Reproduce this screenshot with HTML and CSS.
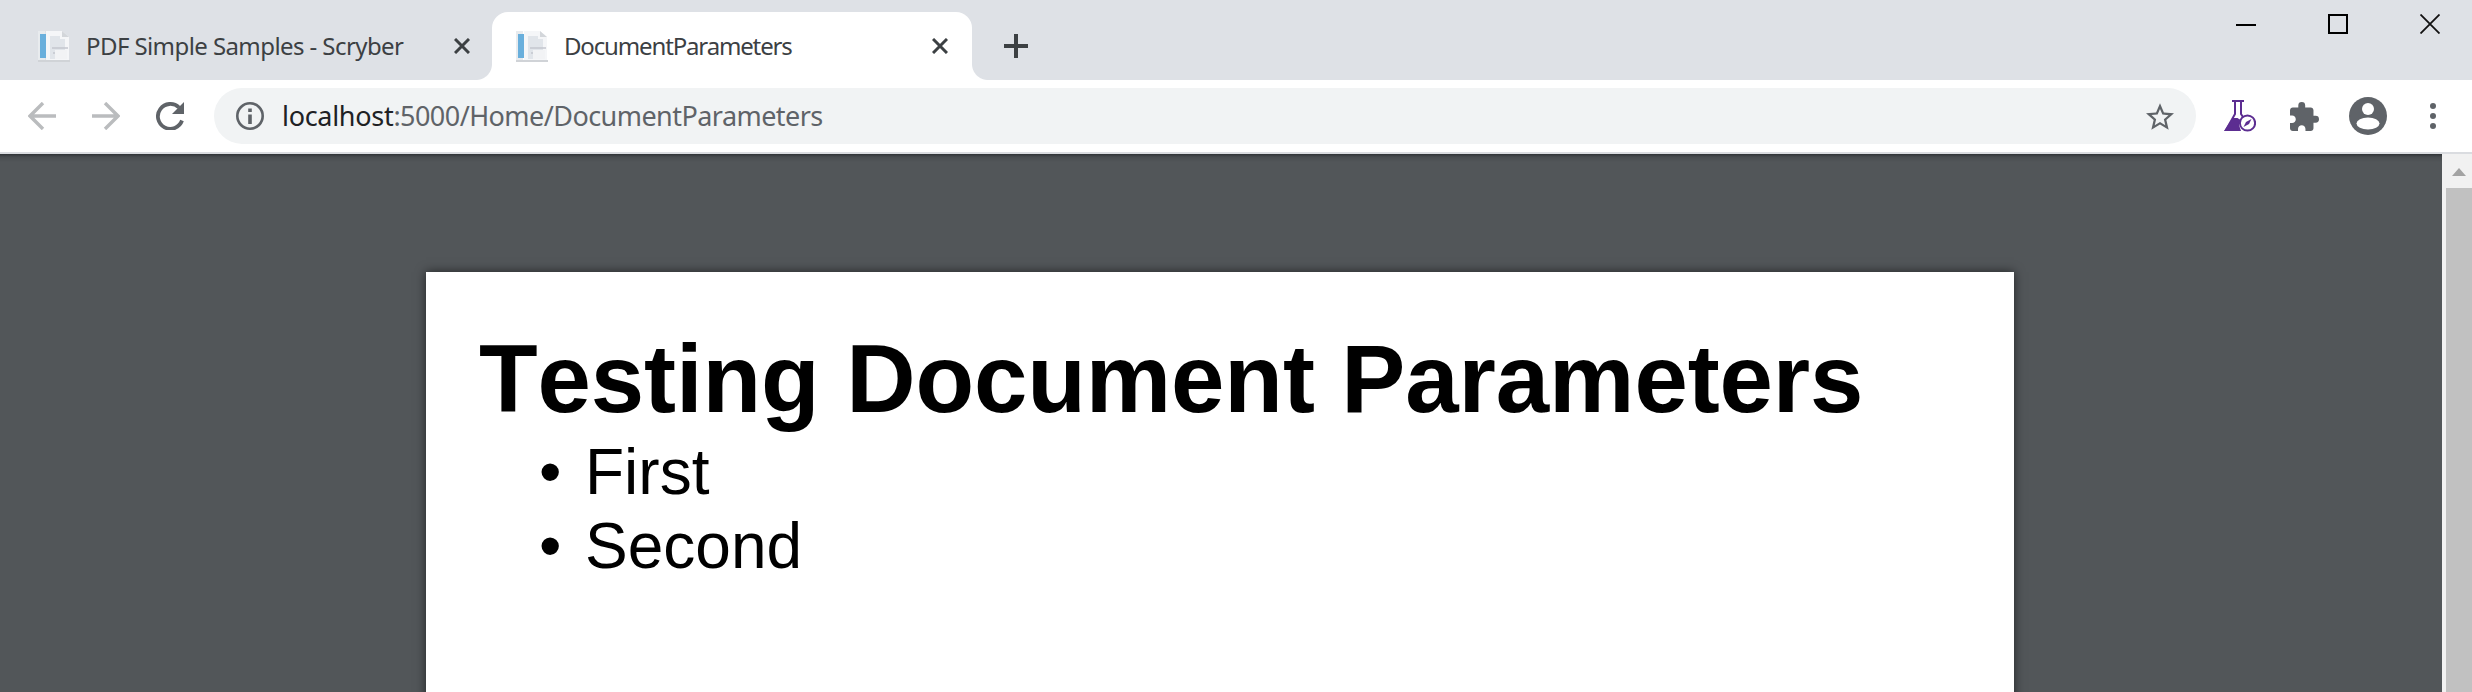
FILE: index.html
```html
<!DOCTYPE html>
<html lang="en">
<head>
<meta charset="utf-8">
<title>DocumentParameters</title>
<link rel="stylesheet" href="styles.css">
</head>
<body>
<svg class="defs" width="0" height="0">
  <symbol id="favicon" viewBox="0 0 32 32">
    <path d="M0 1h7v29h25v2H0z" fill="#e8ebee"/>
    <rect x="2" y="4" width="6" height="24" fill="#69afdc"/>
    <path d="M8 1h16l7 6v23H8z" fill="#f5f6f8"/>
    <path d="M24 1l7 6h-7z" fill="#d3d6da"/>
    <path d="M12 6h10v3H12zM12 9h15v20H12z" fill="#e1e5ea"/>
    <path d="M14 18h16M15 23h13" stroke="#c3c6ce" stroke-width="1.5"/>
    <path d="M17 20h12v9H17z" fill="#f2f3f5"/>
    <path d="M0 31h32" stroke="#c9cbcf" stroke-width="1.5"/>
  </symbol>
  <symbol id="close" viewBox="0 0 16 16"><path d="M1 1l14 14M15 1L1 15" stroke="#3c4043" stroke-width="3"/></symbol>
</svg>
<div class="browser">
  <header class="tabs">
    <div class="tab idle">
      <svg class="fav"><use href="#favicon"/></svg>
      <span class="label">PDF Simple Samples - Scryber</span>
      <svg class="x"><use href="#close"/></svg>
    </div>
    <div class="tab active">
      <svg class="fav"><use href="#favicon"/></svg>
      <span class="label">DocumentParameters</span>
      <svg class="x"><use href="#close"/></svg>
    </div>
    <svg class="plus" viewBox="0 0 24 24"><path d="M12 0v24M0 12h24" stroke="#3c4043" stroke-width="4"/></svg>
    <div class="window-buttons">
      <svg viewBox="0 0 20 20"><path d="M0 11h20" stroke="#000" stroke-width="2"/></svg>
      <svg viewBox="0 0 20 20"><rect x="1" y="1" width="18" height="18" fill="none" stroke="#000" stroke-width="2"/></svg>
      <svg viewBox="0 0 20 20"><path d="M.5.5l19 19M19.5.5l-19 19" stroke="#111" stroke-width="1.8"/></svg>
    </div>
  </header>
  <nav class="toolbar">
    <svg class="nav" viewBox="0 0 28 28"><path d="M28 14H2M15 1L2 14l13 13" fill="none" stroke="#babcbe" stroke-width="3.4"/></svg>
    <svg class="nav" viewBox="0 0 28 28"><path d="M0 14h26M13 1l13 13-13 13" fill="none" stroke="#babcbe" stroke-width="3.4"/></svg>
    <svg class="nav" viewBox="0 0 28 28"><path d="M26 18.500A12.400 12.400 0 1 1 23 5.500" fill="none" stroke="#5f6368" stroke-width="3.800"/><path d="M28 0v12H16z" fill="#5f6368"/></svg>
    <div class="omnibox">
      <svg class="info" viewBox="0 0 28 28"><circle cx="14" cy="14" r="12.7" fill="none" stroke="#5f6368" stroke-width="2.6"/><path d="M14 12.5V22M14 6.5v3.5" stroke="#5f6368" stroke-width="3.6"/></svg>
      <span class="url"><b>localhost</b>:5000/Home/DocumentParameters</span>
      <svg class="star" viewBox="2 2 20 19"><path fill="#5f6368" d="M22 9.24l-7.19-.62L12 2 9.19 8.63 2 9.24l5.46 4.73L5.82 21 12 17.27 18.18 21l-1.63-7.03L22 9.24zM12 15.4l-3.76 2.27 1-4.28-3.32-2.88 4.38-.38L12 6.1l1.71 4.04 4.38.38-3.32 2.88 1 4.28L12 15.4z"/></svg>
    </div>
    <div class="actions">
      <svg class="flask" viewBox="0 0 32 32">
        <path d="M8 1h12" fill="none" stroke="#5c2d91" stroke-width="2"/>
        <path d="M11 1v13L2 30h14M17 1v13l2 3" fill="none" stroke="#5c2d91" stroke-width="2"/>
        <path d="M8.500 18h5l3 2-1.500 5 2 6H0z" fill="#5c2d91"/>
        <circle cx="23.5" cy="23" r="7.6" fill="#fff" stroke="#5c2d91" stroke-width="2"/>
        <path d="M19.500 27l2.500-5L27.500 19l-2.500 5z" fill="#5c2d91"/>
      </svg>
      <svg class="puzzle" viewBox="2 1 21 21"><path fill="#5f6368" d="M20.500 11H19V7c0-1.100-.9-2-2-2h-4V3.500a2.500 2.500 0 0 0-5 0V5H4c-1.100 0-1.990.9-1.990 2v3.800H3.500c1.490 0 2.700 1.210 2.700 2.700s-1.210 2.700-2.700 2.700H2V20c0 1.100.9 2 2 2h3.800v-1.500c0-1.490 1.210-2.700 2.700-2.700s2.700 1.210 2.700 2.700V22H17c1.100 0 2-.9 2-2v-4h1.500a2.500 2.500 0 0 0 0-5z"/></svg>
      <svg class="user" viewBox="0 0 38 38"><circle cx="19" cy="19" r="19" fill="#5f6368"/><circle cx="19" cy="12" r="6" fill="#fff"/><ellipse cx="19" cy="26.500" rx="11.500" ry="6" fill="#fff"/></svg>
      <svg class="dots" viewBox="0 0 6 26"><g fill="#5f6368"><circle cx="3" cy="3" r="3"/><circle cx="3" cy="13" r="3"/><circle cx="3" cy="23" r="3"/></g></svg>
    </div>
  </nav>
  <main class="viewer">
    <div class="canvas">
      <article class="page">
        <h1>Testing Document Parameters</h1>
        <ul>
          <li><span class="bullet">•</span>First</li>
          <li><span class="bullet">•</span>Second</li>
        </ul>
      </article>
    </div>
    <div class="scrollbar">
      <svg class="up" viewBox="0 0 14 8"><path d="M0 8l7-8 7 8z" fill="#a3a3a3"/></svg>
      <div class="thumb"></div>
    </div>
  </main>
</div>
</body>
</html>
```
FILE: styles.css
```css
* { box-sizing: border-box; }
body { margin: 0; overflow: hidden; }
svg { display: block; flex: none; }
.defs { position: absolute; }
.browser { display: flex; flex-direction: column; width: 2472px; height: 692px; font-family: "Noto Sans", sans-serif; }

.tabs { display: flex; height: 80px; flex: none; background: #dee1e6; padding-top: 12px; }
.tab { display: flex; align-items: center; height: 68px; position: relative; }
.idle { width: 492px; padding: 0 22px 0 38px; }
.active { width: 480px; padding: 0 24px; background: #fff; border-radius: 16px 16px 0 0; }
.active::before, .active::after { content: ""; position: absolute; bottom: 0; width: 16px; height: 16px; }
.active::before { left: -16px; background: radial-gradient(circle at 0 0, transparent 15.5px, #fff 16.5px); }
.active::after { right: -16px; background: radial-gradient(circle at 100% 0, transparent 15.5px, #fff 16.5px); }
.fav { width: 32px; height: 32px; }
.label { flex: 1; margin-left: 16px; font-size: 24px; line-height: 34px; letter-spacing: -0.58px; color: #3c4043; white-space: nowrap; }
.active .label { letter-spacing: -1.15px; }
.x { width: 16px; height: 16px; }
.plus { width: 24px; height: 24px; margin: 22px 0 0 32px; }
.window-buttons { display: flex; gap: 72px; margin: 2px 32px 0 auto; }
.window-buttons svg { width: 20px; height: 20px; }

.toolbar { display: flex; align-items: center; height: 74px; flex: none; padding: 0 32px 0 28px; background: #fff; border-bottom: 2px solid #dadce0; }
.nav { width: 28px; height: 28px; margin-right: 36px; }
.nav + .nav + .nav { margin-right: 30px; }
.omnibox { display: flex; align-items: center; width: 1982px; height: 56px; padding: 0 22px; border-radius: 28px; background: #f1f3f4; }
.info { width: 28px; height: 28px; }
.url { flex: 1; margin-left: 18px; font-size: 27px; line-height: 36px; letter-spacing: -0.55px; color: #5f6368; white-space: nowrap; }
.url b { font-weight: 400; letter-spacing: -0.3px; color: #202124; }
.star { width: 28px; height: 27px; }
.actions { display: flex; align-items: center; flex: 1; margin-left: 28px; }
.flask { width: 32px; height: 32px; }
.puzzle { width: 29px; height: 29px; margin-left: 34px; }
.user { width: 38px; height: 38px; margin-left: 30px; }
.dots { width: 6px; height: 26px; margin-left: 43px; }

.viewer { display: flex; flex: 1; min-height: 0; background: #525659; overflow: hidden; }
.canvas { width: 2442px; padding: 118px 0 0 426px; background: linear-gradient(#2f3336, #484c4f 3px, #525659 8px); }
.page { width: 1588px; height: 500px; padding: 52px 53px; background: #fff; box-shadow: 0 0 10px rgba(0,0,0,.6); font-family: "Liberation Sans", Arial, sans-serif; color: #000; }
h1 { margin: 0; font-size: 96px; line-height: 110px; font-weight: 700; font-kerning: none; letter-spacing: -0.1px; white-space: nowrap; }
ul { margin: 0; padding: 1px 0 0; list-style: none; font-size: 64px; line-height: 74px; }
li { display: flex; }
.bullet { width: 106px; padding-left: 60px; }
.scrollbar { width: 30px; background: #f1f1f1; padding: 14px 0 0 4px; }
.up { width: 14px; height: 8px; margin-left: 6px; }
.thumb { height: 520px; margin-top: 12px; background: #c1c1c1; }
```
